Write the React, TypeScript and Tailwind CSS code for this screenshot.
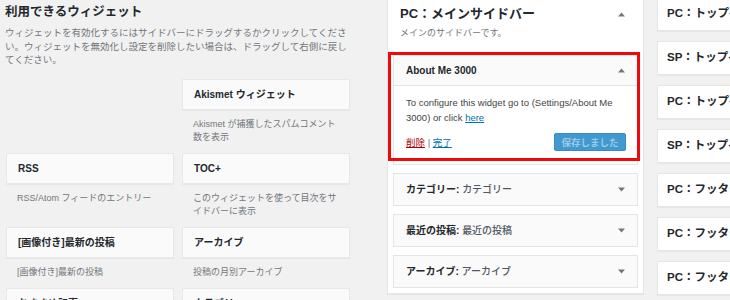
import React from 'react';

const FONT = { fontFamily: '"Liberation Sans", "Noto Sans CJK JP", sans-serif' };

interface AvailableWidget {
  title: string;
  desc: string[];
}

// available widgets, two per row (null = empty slot)
const rows: (AvailableWidget | null)[][] = [
  [null, { title: 'Akismet ウィジェット', desc: ['Akismet が捕獲したスパムコメント', '数を表示'] }],
  [
    { title: 'RSS', desc: ['RSS/Atom フィードのエントリー'] },
    { title: 'TOC+', desc: ['このウィジェットを使って目次をサ', 'イドバーに表示'] },
  ],
  [
    { title: '[画像付き]最新の投稿', desc: ['[画像付き]最新の投稿'] },
    { title: 'アーカイブ', desc: ['投稿の月別アーカイブ'] },
  ],
  [
    { title: 'おすすめ記事', desc: ['おすすめ記事を表示'] },
    { title: 'カテゴリー', desc: ['カテゴリーのリスト'] },
  ],
];

const collapsed = [
  { name: 'カテゴリー', title: 'カテゴリー' },
  { name: '最近の投稿', title: '最近の投稿' },
  { name: 'アーカイブ', title: 'アーカイブ' },
];

const sidebars = [
  'PC：トップページ上',
  'SP：トップページ上',
  'PC：トップページ下',
  'SP：トップページ下',
  'PC：フッター左',
  'PC：フッター中央',
  'PC：フッター右',
];

function Arrow({ up }: { up?: boolean }) {
  return (
    <svg width="7" height="5" viewBox="0 0 7 5" className="shrink-0">
      {up ? <path d="M0 4.5 L3.5 0.5 L7 4.5 Z" fill="#72777c" /> : <path d="M0 0.5 L7 0.5 L3.5 4.5 Z" fill="#72777c" />}
    </svg>
  );
}

function WidgetCard({ w }: { w: AvailableWidget | null }) {
  if (!w) return <div />;
  return (
    <div>
      <div className="h-[31px] bg-[#fafafa] border border-[#e8e8e8] shadow-[0_1px_1px_rgba(0,0,0,0.04)] flex items-center pl-[11px]">
        <span className="text-[10px] font-bold text-[#23282d] whitespace-nowrap">{w.title}</span>
      </div>
      <p className="mt-[8px] pl-[11px] text-[9px] leading-[13px] text-[#72777c] whitespace-nowrap">
        {w.desc.map((d, i) => (
          <React.Fragment key={i}>
            {i > 0 && <br />}
            {d}
          </React.Fragment>
        ))}
      </p>
    </div>
  );
}

export default function App() {
  return (
    <div className="w-[730px] h-[300px] overflow-hidden bg-[#f1f1f1] flex" style={FONT}>
      {/* Available widgets */}
      <div className="w-[387px] shrink-0 pl-[5px] pt-[4px]">
        <h2 className="text-[12.5px] leading-[16px] font-bold text-[#23282d]">利用できるウィジェット</h2>
        <p className="mt-[6px] text-[9.5px] leading-[13.5px] text-[#72777c] whitespace-nowrap">
          ウィジェットを有効化するにはサイドバーにドラッグするかクリックしてくださ
          <br />
          い。ウィジェットを無効化し設定を削除したい場合は、ドラッグして右側に戻し
          <br />
          てください。
        </p>
        <div className="mt-[12px] ml-[1px] grid grid-cols-[168px_168px] gap-x-[8px] gap-y-[9px]">
          {rows.flat().map((w, i) => (
            <WidgetCard key={i} w={w} />
          ))}
        </div>
      </div>

      {/* Main sidebar */}
      <div className="w-[257px] shrink-0 h-[294px] bg-white border-x border-b border-[#e5e5e5] shadow-[0_1px_1px_rgba(0,0,0,0.04)] px-[5px] pt-[5px]">
        <div className="flex items-center justify-between pl-[7px] pr-[13px]">
          <h2 className="text-[13px] leading-[18px] font-bold text-[#23282d]">PC：メインサイドバー</h2>
          <Arrow up />
        </div>
        <p className="mt-[4px] pl-[7px] text-[9px] leading-[13px] text-[#72777c]">メインのサイドバーです。</p>

        <div className="relative mt-[15px] border border-[#e5e5e5] bg-white">
          <div className="h-[30px] bg-[#fafafa] border-b border-[#e5e5e5] flex items-center justify-between pl-[12px] pr-[12px]">
            <span className="text-[10px] font-bold text-[#23282d]">About Me 3000</span>
            <Arrow up />
          </div>
          <div className="pl-[12px] pr-[11px] pt-[9px] pb-[13px] text-[9.5px] leading-[15px] text-[#444]">
            <p className="whitespace-nowrap">
              To configure this widget go to (Settings/About Me
              <br />
              3000) or click <span className="text-[#0073aa] underline">here</span>
            </p>
            <div className="mt-[8px] flex items-center justify-between">
              <span className="text-[9.5px]">
                <span className="text-[#a00] underline">削除</span>
                <span className="text-[#72777c]"> | </span>
                <span className="text-[#0073aa] underline">完了</span>
              </span>
              <span className="w-[72px] h-[18px] rounded-[2px] bg-[#4199cf] border border-[#3a8cbf] text-[#9ccbe8] text-[9.5px] font-bold flex items-center justify-center">
                保存しました
              </span>
            </div>
          </div>
          {/* annotation frame */}
          <div className="absolute left-[-6px] right-[-3px] top-[-4px] bottom-[3px] border-[3px] border-[#ee0a0a] pointer-events-none" />
        </div>

        <div className="mt-[8px] flex flex-col gap-[8px]">
          {collapsed.map((c) => (
            <div
              key={c.name}
              className="h-[33px] bg-[#fafafa] border border-[#e5e5e5] flex items-center justify-between pl-[12px] pr-[12px]"
            >
              <span className="text-[10px] whitespace-nowrap">
                <span className="font-bold text-[#23282d]">{c.name}:</span>
                <span className="font-medium text-[#50575e]"> {c.title}</span>
              </span>
              <Arrow />
            </div>
          ))}
        </div>
      </div>

      {/* Other sidebars */}
      <div className="ml-[13px] mt-[-3px] flex flex-col gap-[10px]">
        {sidebars.map((s, i) => (
          <div
            key={i}
            className="w-[200px] h-[34px] bg-white border border-[#e5e5e5] shadow-[0_1px_1px_rgba(0,0,0,0.04)] flex items-center pl-[9px]"
          >
            <span className="text-[11.5px] font-bold text-[#23282d] whitespace-nowrap">{s}</span>
          </div>
        ))}
      </div>
    </div>
  );
}
